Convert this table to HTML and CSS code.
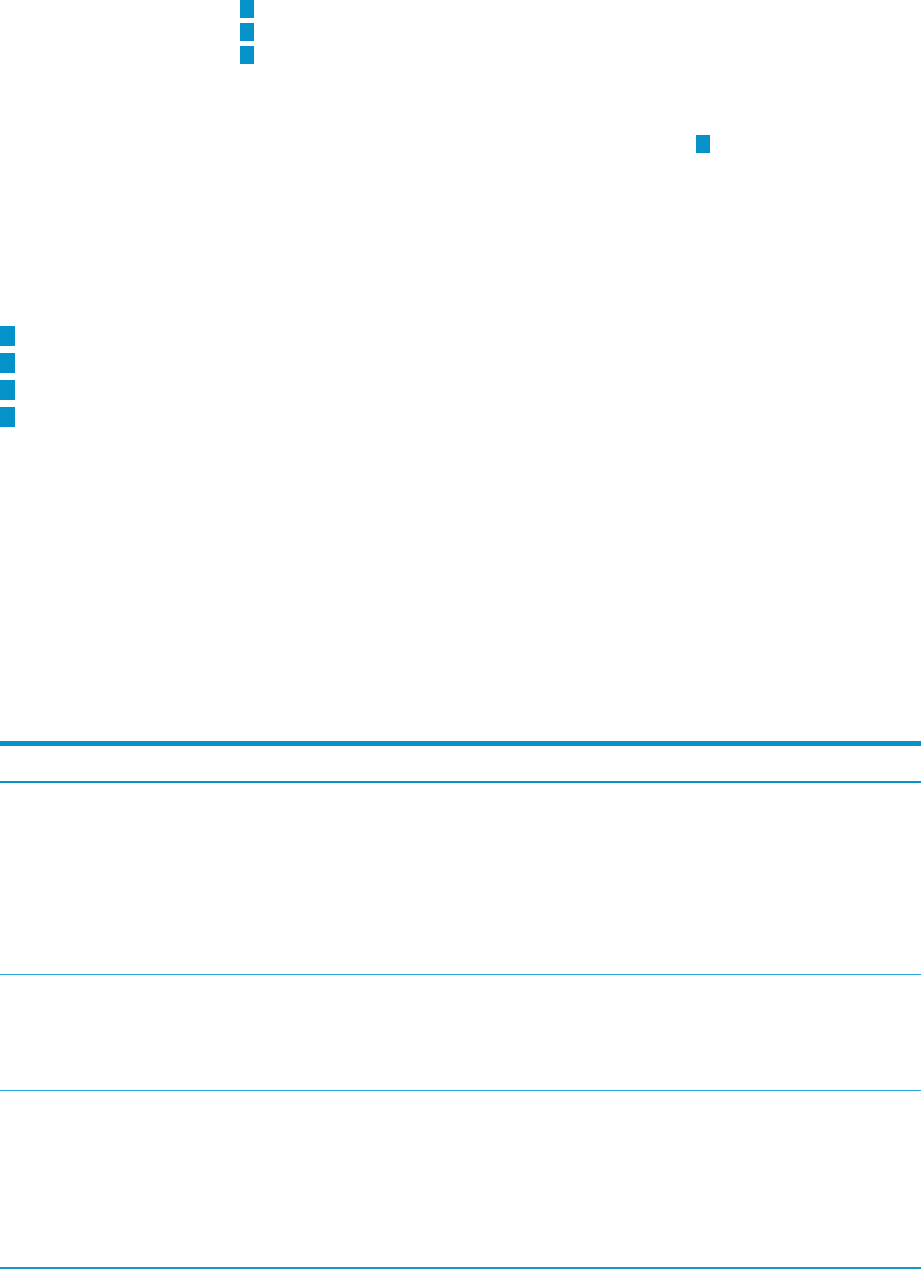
FILE: index.html
```html
<!DOCTYPE html>
<html lang="en">
<head>
    <meta charset="UTF-8">
    <meta name="viewport" content="width=device-width, initial-scale=1.0">
    <title>Documento</title>
    <link rel="stylesheet" href="styles.css">
</head>
<body>
    <ul class="bullets top">
        <li></li>
        <li></li>
        <li></li>
    </ul>

    <div class="lone">
        <span class="mark"></span>
    </div>

    <ul class="bullets side">
        <li></li>
        <li></li>
        <li></li>
        <li></li>
    </ul>

    <table class="grid">
        <thead>
            <tr><th></th></tr>
        </thead>
        <tbody>
            <tr class="row-a"><td></td></tr>
            <tr class="row-b"><td></td></tr>
            <tr class="row-c"><td></td></tr>
        </tbody>
    </table>
</body>
</html>
```

FILE: styles.css
```css
body {
    margin: 0;
    background: #fff;
    font-family: "Liberation Sans", Arial, sans-serif;
    width: 922px;
}

.bullets {
    list-style: none;
    margin: 0;
    padding: 0;
    display: flex;
    flex-direction: column;
}

.bullets li {
    background: #0592c8;
}

.top {
    padding-left: 240px;
    gap: 5px;

    li {
        width: 14px;
        height: 18px;
    }
}

.lone {
    margin-top: 71px;
    padding-left: 696px;
    height: 18px;

    .mark {
        display: block;
        width: 14px;
        height: 18px;
        background: #0592c8;
    }
}

.side {
    margin-top: 173px;
    gap: 7px;

    li {
        width: 15px;
        height: 20px;
    }
}

.grid {
    margin-top: 314px;
    width: 921px;
    border-collapse: collapse;

    th, td {
        padding: 0;
    }

    thead tr {
        height: 38px;
        border-top: 5px solid #0592c8;
        border-bottom: 2px solid #0592c8;
    }

    tbody tr {
        border-bottom: 1px solid #2aa3d8;
    }

    .row-a { height: 193px; }
    .row-b { height: 116px; }
    .row-c { height: 177px; }

    .row-c {
        border-bottom: 2px solid #1596c8;
    }
}
```
